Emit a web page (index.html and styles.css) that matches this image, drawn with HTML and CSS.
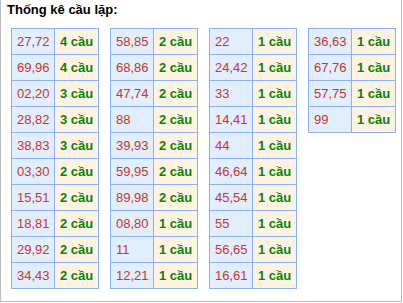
FILE: index.html
```html
<!DOCTYPE html>
<html>
<head>
<meta charset="utf-8">
<link rel="stylesheet" href="styles.css">
</head>
<body>
<div class="box">
  <div class="title">Thống kê cầu lặp:</div>
  <div class="tables">
    <table class="t">
      <tr><td class="n">27,72</td><td class="c">4 cầu</td></tr>
      <tr><td class="n">69,96</td><td class="c">4 cầu</td></tr>
      <tr><td class="n">02,20</td><td class="c">3 cầu</td></tr>
      <tr><td class="n">28,82</td><td class="c">3 cầu</td></tr>
      <tr><td class="n">38,83</td><td class="c">3 cầu</td></tr>
      <tr><td class="n">03,30</td><td class="c">2 cầu</td></tr>
      <tr><td class="n">15,51</td><td class="c">2 cầu</td></tr>
      <tr><td class="n">18,81</td><td class="c">2 cầu</td></tr>
      <tr><td class="n">29,92</td><td class="c">2 cầu</td></tr>
      <tr><td class="n">34,43</td><td class="c">2 cầu</td></tr>
    </table>
    <table class="t">
      <tr><td class="n">58,85</td><td class="c">2 cầu</td></tr>
      <tr><td class="n">68,86</td><td class="c">2 cầu</td></tr>
      <tr><td class="n">47,74</td><td class="c">2 cầu</td></tr>
      <tr><td class="n">88</td><td class="c">2 cầu</td></tr>
      <tr><td class="n">39,93</td><td class="c">2 cầu</td></tr>
      <tr><td class="n">59,95</td><td class="c">2 cầu</td></tr>
      <tr><td class="n">89,98</td><td class="c">2 cầu</td></tr>
      <tr><td class="n">08,80</td><td class="c">1 cầu</td></tr>
      <tr><td class="n">11</td><td class="c">1 cầu</td></tr>
      <tr><td class="n">12,21</td><td class="c">1 cầu</td></tr>
    </table>
    <table class="t">
      <tr><td class="n">22</td><td class="c">1 cầu</td></tr>
      <tr><td class="n">24,42</td><td class="c">1 cầu</td></tr>
      <tr><td class="n">33</td><td class="c">1 cầu</td></tr>
      <tr><td class="n">14,41</td><td class="c">1 cầu</td></tr>
      <tr><td class="n">44</td><td class="c">1 cầu</td></tr>
      <tr><td class="n">46,64</td><td class="c">1 cầu</td></tr>
      <tr><td class="n">45,54</td><td class="c">1 cầu</td></tr>
      <tr><td class="n">55</td><td class="c">1 cầu</td></tr>
      <tr><td class="n">56,65</td><td class="c">1 cầu</td></tr>
      <tr><td class="n">16,61</td><td class="c">1 cầu</td></tr>
    </table>
    <table class="t">
      <tr><td class="n">36,63</td><td class="c">1 cầu</td></tr>
      <tr><td class="n">67,76</td><td class="c">1 cầu</td></tr>
      <tr><td class="n">57,75</td><td class="c">1 cầu</td></tr>
      <tr><td class="n">99</td><td class="c">1 cầu</td></tr>
    </table>
  </div>
</div>
</body>
</html>
```
FILE: styles.css
```css
html, body {
  margin: 0;
  padding: 0;
  background: #fff;
}
body {
  font-family: Arial, "Liberation Sans", sans-serif;
  font-size: 13px;
  width: 403px;
  height: 303px;
}
.box {
  width: 400px;
  height: 301px;
  border-left: 1px solid #bdbdbd;
  border-right: 1px solid #bdbdbd;
  border-bottom: 1px solid #bdbdbd;
}
.title {
  font-weight: bold;
  color: #000;
  line-height: 16px;
  padding: 2px 0 0 6px;
  height: 16px;
}
.tables {
  display: flex;
  align-items: flex-start;
  gap: 11px;
  padding: 10px 0 0 10px;
}
.t {
  border-collapse: collapse;
  table-layout: fixed;
  width: 88px;
}
.t td {
  border: 1px solid #8cb1f2;
  height: 25px;
  padding: 0 0 0 5px;
  line-height: 25px;
  white-space: nowrap;
  box-sizing: border-box;
}
.t td.n {
  width: 43px;
  background: #e2edfe;
  color: #c1392b;
}
.t td.c {
  background: #fef3e2;
  color: #0b800b;
  font-weight: bold;
}
```
